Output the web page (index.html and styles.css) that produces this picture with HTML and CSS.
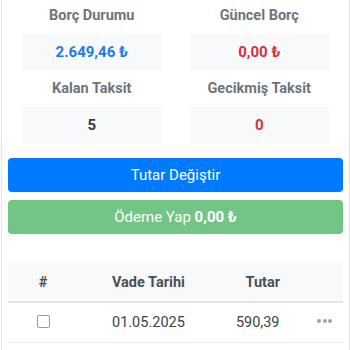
FILE: index.html
```html
<!DOCTYPE html>
<html lang="tr">
<head>
<meta charset="utf-8">
<title>Borç</title>
<link rel="stylesheet" href="styles.css">
</head>
<body>
<div class="card">
  <div class="stats">
    <div class="stat">
      <div class="label first">Borç Durumu</div>
      <div class="box blue">2.649,46 ₺</div>
    </div>
    <div class="stat">
      <div class="label first">Güncel Borç</div>
      <div class="box red">0,00 ₺</div>
    </div>
    <div class="stat">
      <div class="label">Kalan Taksit</div>
      <div class="box dark">5</div>
    </div>
    <div class="stat">
      <div class="label">Gecikmiş Taksit</div>
      <div class="box red">0</div>
    </div>
  </div>
  <div class="actions">
    <button class="btn btn-primary">Tutar Değiştir</button>
    <button class="btn btn-success" disabled>Ödeme Yap <b>0,00 ₺</b></button>
  </div>
  <table class="table">
    <colgroup>
      <col class="c1"><col class="c2"><col class="c3"><col class="c4">
    </colgroup>
    <thead>
      <tr><th>#</th><th>Vade Tarihi</th><th>Tutar</th><th></th></tr>
    </thead>
    <tbody>
      <tr>
        <td><span class="check"></span></td>
        <td>01.05.2025</td>
        <td class="num">590,39</td>
        <td><span class="dots"><i></i><i></i><i></i></span></td>
      </tr>
    </tbody>
  </table>
</div>
</body>
</html>
```

FILE: styles.css
```css
html, body {
  margin: 0;
  padding: 0;
  background: #fff;
}
body {
  font-family: Roboto, "Liberation Sans", sans-serif;
}
.card {
  margin-left: 1px;
  padding: 0 6px;
  border-left: 1px solid #e6e6e6;
  border-right: 1px solid #e6e6e6;
  min-height: 350px;
  box-sizing: border-box;
}
.stats {
  display: grid;
  grid-template-columns: 1fr 1fr;
}
.stat {
  display: flex;
  flex-direction: column;
}
.label {
  padding: 8px 0;
  line-height: 21px;
  text-align: center;
  font-size: 14.5px;
  font-weight: 700;
  color: #6c757d;
}
.label.first {
  padding-top: 5px;
}
.box {
  margin: 0 14px;
  height: 36px;
  line-height: 36px;
  text-align: center;
  background: #f8f9fa;
  font-size: 15px;
  font-weight: 700;
}
.blue { color: #1b7bea; }
.red { color: #d7303f; }
.dark { color: #343a40; }
.actions {
  display: flex;
  flex-direction: column;
  gap: 8px;
  margin-top: 15px;
}
.btn {
  display: block;
  width: 100%;
  height: 34px;
  border: none;
  border-radius: 4px;
  font-family: inherit;
  font-size: 15px;
  color: #fff;
  padding: 0;
}
.btn-primary {
  background: #007bff;
}
.btn-success {
  background: #28a745;
  opacity: 0.65;
}
.btn b {
  font-weight: 700;
}
.table {
  width: 100%;
  table-layout: fixed;
  margin-top: 29px;
  border-collapse: collapse;
  font-size: 14.5px;
}
.c1 { width: 70px; }
.c2 { width: 140px; }
.c3 { width: 88px; }
.c4 { width: 36px; }
.table th {
  height: 38px;
  padding: 0;
  background: #f8f9fa;
  border-bottom: 2px solid #e3e6e9;
  font-weight: 700;
  color: #495057;
  text-align: center;
}
.table td {
  height: 39px;
  padding: 0;
  border-bottom: 1px solid #e9ecef;
  color: #3d4248;
  text-align: center;
}
.table td.num {
  padding-right: 10px;
}
.check {
  display: inline-block;
  width: 11px;
  height: 11px;
  border: 1px solid #9a9a9a;
  border-radius: 2px;
  vertical-align: middle;
  position: relative;
  top: -2px;
}
.dots {
  display: inline-flex;
  gap: 1.5px;
  vertical-align: middle;
  position: relative;
  top: -2px;
}
.dots i {
  display: block;
  width: 4px;
  height: 4px;
  border-radius: 50%;
  background: #a3a3a3;
}
```
